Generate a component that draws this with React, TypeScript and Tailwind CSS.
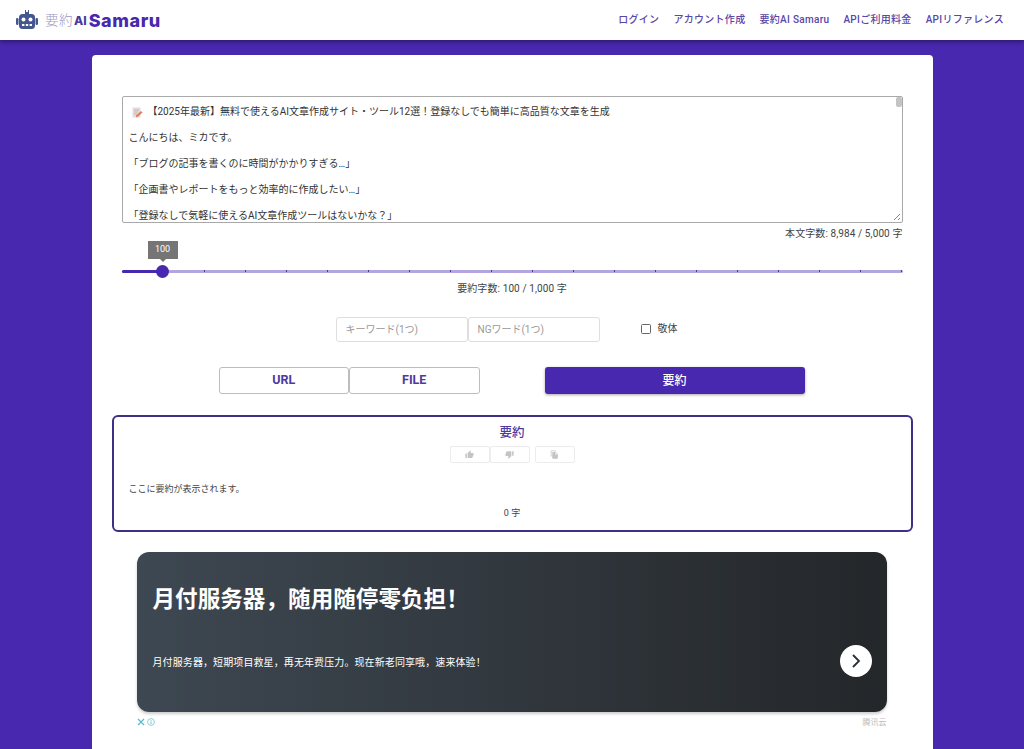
import { MdThumbUp, MdThumbDown, MdFileCopy } from "react-icons/md";

const navItems = ["ログイン", "アカウント作成", "要約AI Samaru", "APIご利用料金", "APIリファレンス"];

const lines = [
  "こんにちは、ミカです。",
  "「ブログの記事を書くのに時間がかかりすぎる…」",
  "「企画書やレポートをもっと効率的に作成したい…」",
  "「登録なしで気軽に使えるAI文章作成ツールはないかな？」",
];

function RobotLogo() {
  return (
    <svg width="22" height="20" viewBox="0 0 22 20" className="shrink-0">
      <path d="M9 0h1v2h2V0h1v4H9z" fill="#44568f" />
      <rect x="3" y="4" width="16" height="15" rx="3.5" fill="#44568f" />
      <rect x="0" y="8" width="2.5" height="7" rx="1.2" fill="#44568f" />
      <rect x="19.5" y="8" width="2.5" height="7" rx="1.2" fill="#44568f" />
      <circle cx="7.5" cy="9.5" r="2" fill="#fff" />
      <circle cx="14.5" cy="9.5" r="2" fill="#fff" />
      <rect x="6" y="14" width="2.4" height="2" fill="#fff" />
      <rect x="9.8" y="14" width="2.4" height="2" fill="#fff" />
      <rect x="13.6" y="14" width="2.4" height="2" fill="#fff" />
    </svg>
  );
}

function MemoIcon() {
  return (
    <svg width="11" height="11" viewBox="0 0 11 11" className="shrink-0">
      <rect x="0.5" y="0.5" width="8" height="10" fill="#e4dcdc" />
      <path d="M2 3h5M2 5h4M2 7h3" stroke="#b9a9a9" strokeWidth="0.7" />
      <path d="M4 8.5 9 4l1.5 1.5L5.5 10H4z" fill="#ec7a55" />
    </svg>
  );
}

function Slider() {
  const ticks = Array.from({ length: 18 });
  return (
    <div className="relative mt-[29px] h-[3px] bg-[#b3a5e0] rounded-full">
      <div className="h-[3px] w-[41px] bg-[#4828ae] rounded-l-full" />
      <div className="absolute inset-0 flex pl-[82px] gap-[40px]">
        {ticks.map((_, i) => (
          <span key={i} className="w-px h-[2px] bg-[#4d3a8f]" />
        ))}
      </div>
      <div className="absolute left-[34.5px] top-[-5px] w-[13px] h-[13px] rounded-full bg-[#4828ae]" />
      <div className="absolute left-[26px] top-[-29px] w-[30px] h-[18px] bg-[#757575] text-white text-[9px] flex items-center justify-center">
        100
        <span className="absolute bottom-[-3px] left-[12px] w-0 h-0 border-x-[3px] border-t-[3px] border-x-transparent border-t-[#757575]" />
      </div>
    </div>
  );
}

export default function App() {
  return (
    <div className="h-screen overflow-hidden bg-[#4828ae] font-[Roboto,'Noto_Sans_CJK_JP',sans-serif] text-[#333333]">
      <header className="relative h-[40px] bg-white flex items-center justify-between pl-[16px] pr-[20px] shadow-[0_2px_4px_rgba(0,0,0,0.35)]">
        <div className="flex items-center">
          <RobotLogo />
          <span className="ml-[7px] text-[13.5px] font-light text-[#9a96c0] tracking-[0.5px]">要約</span>
          <span className="ml-[1px] text-[12px] font-[Inter] font-extrabold text-[#4a3aa0] mt-[2px]">AI</span>
          <span className="ml-[2px] text-[18px] font-[Inter] font-extrabold text-[#4828ae] tracking-[0.55px]">Samaru</span>
        </div>
        <nav className="flex gap-[14px] mb-[2px] text-[10px] font-medium text-[#5a46a6] tracking-[0.3px]">
          {navItems.map((item) => (
            <a key={item}>{item}</a>
          ))}
        </nav>
      </header>

      <main className="mx-auto mt-[15px] w-[841px] h-[700px] bg-white rounded-t-[4px] px-[30px] pt-[41px]">
        <div className="relative h-[127px] border border-[#a9a9a9] rounded-[2px] overflow-hidden px-[6px] pt-[6px] text-[10px] leading-[26px] text-[#333333]">
          <div className="flex items-center gap-[5px] pl-[3px] h-[18px]">
            <MemoIcon />
            <span>【2025年最新】無料で使えるAI文章作成サイト・ツール12選！登録なしでも簡単に高品質な文章を生成</span>
          </div>
          <div className="mt-[4px]">
            {lines.map((line) => (
              <p key={line}>{line}</p>
            ))}
          </div>
          <span className="absolute top-0 right-0 w-[6px] h-[10px] bg-[#c4c4c4] rounded-[2px]" />
          <svg width="8" height="8" viewBox="0 0 8 8" className="absolute right-px bottom-px">
            <path d="M1 7 7 1M5 7l2-2" stroke="#666" strokeWidth="0.8" />
          </svg>
        </div>
        <p className="mt-[4px] text-right text-[10px] leading-[14px] text-[#444444] tracking-[0.1px]">本文字数: 8,984 / 5,000 字</p>

        <Slider />
        <p className="mt-[9px] text-center text-[10px] leading-[14px] text-[#444444] tracking-[0.1px]">要約字数: 100 / 1,000 字</p>

        <div className="mt-[21px] ml-[214px] flex items-center">
          <input
            placeholder="キーワード(1つ)"
            className="w-[132px] h-[25px] border border-[#dedede] rounded-[3px] px-[9px] text-[10px] placeholder:text-[#999999]"
          />
          <input
            placeholder="NGワード(1つ)"
            className="w-[132px] h-[25px] border border-[#dedede] rounded-[3px] px-[9px] text-[10px] placeholder:text-[#999999]"
          />
          <span className="ml-[41px] mb-[2px] w-[10px] h-[10px] border border-[#666666] rounded-[1.5px]" />
          <span className="ml-[7px] mb-[2px] text-[10px] text-[#444444]">敬体</span>
        </div>

        <div className="mt-[25px] flex items-center pl-[97px]">
          <button className="w-[130.5px] h-[27px] border border-[#bdbdbd] rounded-[3px] text-[12.5px] font-bold text-[#4d3aa0]">URL</button>
          <button className="w-[130.5px] h-[27px] border border-[#bdbdbd] rounded-[3px] text-[12.5px] font-bold text-[#4d3aa0]">FILE</button>
          <button className="ml-[65px] w-[260px] h-[27px] bg-[#4828ae] rounded-[3px] text-[12px] font-medium text-white shadow-[0_1px_3px_rgba(0,0,0,0.35)]">要約</button>
        </div>

        <section className="mt-[21px] -mx-[10px] h-[117px] border-2 border-[#3f2f86] rounded-[6px] px-[15px] pt-[7px]">
          <h2 className="text-center text-[12.5px] leading-[18px] font-medium text-[#4d3aa0]">要約</h2>
          <div className="mt-[4px] ml-[321px] flex">
            <button className="w-[40px] h-[17px] border border-[#ececec] rounded-[2px] flex items-center justify-center text-[#c4c4c4]"><MdThumbUp size={9} /></button>
            <button className="w-[40px] h-[17px] border border-[#ececec] rounded-[2px] flex items-center justify-center text-[#c4c4c4]"><MdThumbDown size={9} /></button>
            <button className="ml-[5px] w-[40px] h-[17px] border border-[#ececec] rounded-[2px] flex items-center justify-center text-[#c4c4c4]"><MdFileCopy size={9} /></button>
          </div>
          <p className="mt-[19px] text-[9px] leading-[14px] text-[#444444]">ここに要約が表示されます。</p>
          <p className="mt-[10px] text-center text-[9px] leading-[14px] text-[#444444]">0 字</p>
        </section>

        <div className="mt-[20px] ml-[15px] mr-[16px] h-[160px] rounded-[12px] bg-gradient-to-r from-[#3e4852] to-[#24272a] shadow-[0_2px_3px_rgba(0,0,0,0.2)] pl-[16px] pr-[15px] font-['Noto_Sans_CJK_SC',sans-serif] text-white flex flex-col">
          <h3 className="mt-[30px] text-[22.6px] leading-[32px] font-bold">月付服务器，随用随停零负担！</h3>
          <div className="mt-[31px] flex items-center justify-between">
            <p className="text-[10px] tracking-[0.1px]">月付服务器，短期项目救星，再无年费压力。现在新老同享哦，速来体验！</p>
            <span className="w-[32px] h-[32px] rounded-full bg-white flex items-center justify-center">
              <svg width="12" height="16" viewBox="0 0 12 16">
                <path d="M3 2l6 6-6 6" fill="none" stroke="#2a2e33" strokeWidth="1.8" />
              </svg>
            </span>
          </div>
        </div>
        <div className="mt-[4px] ml-[15px] mr-[16px] flex items-center justify-between">
          <div className="flex items-center gap-[2px] text-[#5bbcc8]">
            <svg width="8" height="8" viewBox="0 0 8 8">
              <path d="M1 1l6 6M7 1 1 7" stroke="currentColor" strokeWidth="1.3" />
            </svg>
            <svg width="8" height="8" viewBox="0 0 8 8">
              <circle cx="4" cy="4" r="3.4" fill="none" stroke="currentColor" strokeWidth="0.7" />
              <path d="M4 2v.8M4 3.5V6" stroke="currentColor" strokeWidth="0.9" />
            </svg>
          </div>
          <span className="text-[8px] leading-[12px] text-[#bdbdbd] font-['Noto_Sans_CJK_SC',sans-serif]">腾讯云</span>
        </div>
      </main>
    </div>
  );
}
